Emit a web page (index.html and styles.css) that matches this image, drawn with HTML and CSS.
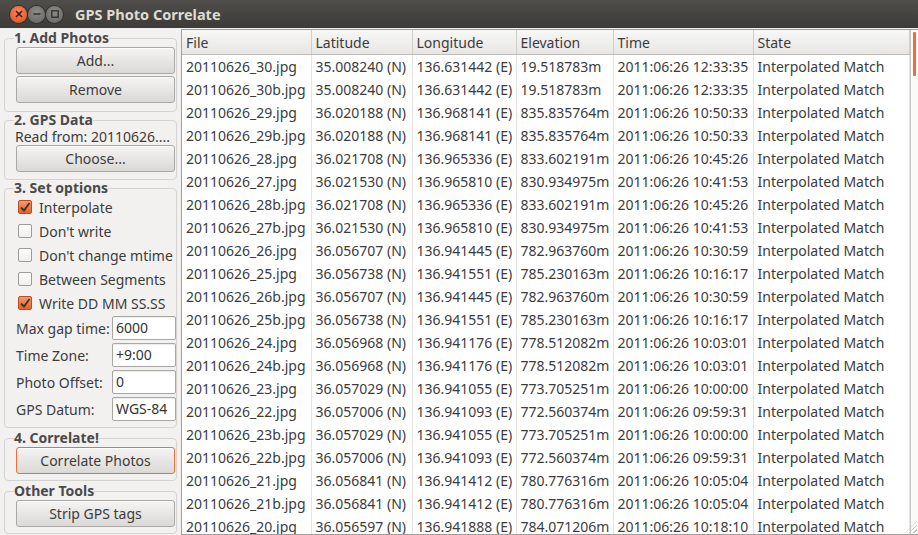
FILE: index.html
```html
<!DOCTYPE html>
<html lang="en">
<head>
  <meta charset="UTF-8" />
  <title>GPS Photo Correlate</title>
  <link rel="stylesheet" href="styles.css">
</head>
<body>
  <div class="window">
    <div class="titlebar">
      <div class="wm-buttons">
        <span class="wm-btn close">
          <svg width="8" height="8" viewBox="0 0 8 8"><path d="M1 1L7 7M7 1L1 7" stroke="#3a1a0a" stroke-width="1.6"/></svg>
        </span>
        <span class="wm-btn">
          <svg width="8" height="8" viewBox="0 0 8 8"><path d="M0.5 4H7.5" stroke="#2e2d2a" stroke-width="1.4"/></svg>
        </span>
        <span class="wm-btn">
          <svg width="8" height="8" viewBox="0 0 8 8"><rect x="0.8" y="0.8" width="6.4" height="6.4" fill="none" stroke="#2e2d2a" stroke-width="1.3"/></svg>
        </span>
      </div>
      <div class="title">GPS Photo Correlate</div>
    </div>

    <div class="main">
      <div class="sidebar">
        <fieldset class="frame photos-frame">
          <legend>1. Add Photos</legend>
          <button class="btn">Add...</button>
          <button class="btn">Remove</button>
        </fieldset>

        <fieldset class="frame gps-frame">
          <legend>2. GPS Data</legend>
          <div class="read-from">Read from: 20110626....</div>
          <button class="btn">Choose...</button>
        </fieldset>

        <fieldset class="frame options">
          <legend>3. Set options</legend>
          <label class="check"><span class="box checked"><svg width="12" height="12" viewBox="0 0 12 12"><path d="M2 6.5L5 9.5L10.5 2" fill="none" stroke="#4a2c1c" stroke-width="1.8"/></svg></span>Interpolate</label>
          <label class="check"><span class="box"></span>Don't write</label>
          <label class="check"><span class="box"></span>Don't change mtime</label>
          <label class="check"><span class="box"></span>Between Segments</label>
          <label class="check"><span class="box checked"><svg width="12" height="12" viewBox="0 0 12 12"><path d="M2 6.5L5 9.5L10.5 2" fill="none" stroke="#4a2c1c" stroke-width="1.8"/></svg></span>Write DD MM SS.SS</label>
          <div class="form">
            <span>Max gap time:</span><span class="entry">6000</span>
            <span>Time Zone:</span><span class="entry">+9:00</span>
            <span>Photo Offset:</span><span class="entry">0</span>
            <span>GPS Datum:</span><span class="entry">WGS-84</span>
          </div>
        </fieldset>

        <fieldset class="frame">
          <legend>4. Correlate!</legend>
          <button class="btn focus">Correlate Photos</button>
        </fieldset>

        <fieldset class="frame tools">
          <legend>Other Tools</legend>
          <button class="btn">Strip GPS tags</button>
        </fieldset>
      </div>

      <div class="list">
        <div class="list-scroll">
          <table class="photos">
            <colgroup>
              <col style="width:129px"><col style="width:101px"><col style="width:104px"><col style="width:97px"><col style="width:140px"><col>
            </colgroup>
            <thead>
              <tr><th>File</th><th>Latitude</th><th>Longitude</th><th>Elevation</th><th>Time</th><th>State</th></tr>
            </thead>
            <tbody>
              <tr><td>20110626_30.jpg</td><td>35.008240 (N)</td><td>136.631442 (E)</td><td>19.518783m</td><td>2011:06:26 12:33:35</td><td>Interpolated Match</td></tr>
              <tr><td>20110626_30b.jpg</td><td>35.008240 (N)</td><td>136.631442 (E)</td><td>19.518783m</td><td>2011:06:26 12:33:35</td><td>Interpolated Match</td></tr>
              <tr><td>20110626_29.jpg</td><td>36.020188 (N)</td><td>136.968141 (E)</td><td>835.835764m</td><td>2011:06:26 10:50:33</td><td>Interpolated Match</td></tr>
              <tr><td>20110626_29b.jpg</td><td>36.020188 (N)</td><td>136.968141 (E)</td><td>835.835764m</td><td>2011:06:26 10:50:33</td><td>Interpolated Match</td></tr>
              <tr><td>20110626_28.jpg</td><td>36.021708 (N)</td><td>136.965336 (E)</td><td>833.602191m</td><td>2011:06:26 10:45:26</td><td>Interpolated Match</td></tr>
              <tr><td>20110626_27.jpg</td><td>36.021530 (N)</td><td>136.965810 (E)</td><td>830.934975m</td><td>2011:06:26 10:41:53</td><td>Interpolated Match</td></tr>
              <tr><td>20110626_28b.jpg</td><td>36.021708 (N)</td><td>136.965336 (E)</td><td>833.602191m</td><td>2011:06:26 10:45:26</td><td>Interpolated Match</td></tr>
              <tr><td>20110626_27b.jpg</td><td>36.021530 (N)</td><td>136.965810 (E)</td><td>830.934975m</td><td>2011:06:26 10:41:53</td><td>Interpolated Match</td></tr>
              <tr><td>20110626_26.jpg</td><td>36.056707 (N)</td><td>136.941445 (E)</td><td>782.963760m</td><td>2011:06:26 10:30:59</td><td>Interpolated Match</td></tr>
              <tr><td>20110626_25.jpg</td><td>36.056738 (N)</td><td>136.941551 (E)</td><td>785.230163m</td><td>2011:06:26 10:16:17</td><td>Interpolated Match</td></tr>
              <tr><td>20110626_26b.jpg</td><td>36.056707 (N)</td><td>136.941445 (E)</td><td>782.963760m</td><td>2011:06:26 10:30:59</td><td>Interpolated Match</td></tr>
              <tr><td>20110626_25b.jpg</td><td>36.056738 (N)</td><td>136.941551 (E)</td><td>785.230163m</td><td>2011:06:26 10:16:17</td><td>Interpolated Match</td></tr>
              <tr><td>20110626_24.jpg</td><td>36.056968 (N)</td><td>136.941176 (E)</td><td>778.512082m</td><td>2011:06:26 10:03:01</td><td>Interpolated Match</td></tr>
              <tr><td>20110626_24b.jpg</td><td>36.056968 (N)</td><td>136.941176 (E)</td><td>778.512082m</td><td>2011:06:26 10:03:01</td><td>Interpolated Match</td></tr>
              <tr><td>20110626_23.jpg</td><td>36.057029 (N)</td><td>136.941055 (E)</td><td>773.705251m</td><td>2011:06:26 10:00:00</td><td>Interpolated Match</td></tr>
              <tr><td>20110626_22.jpg</td><td>36.057006 (N)</td><td>136.941093 (E)</td><td>772.560374m</td><td>2011:06:26 09:59:31</td><td>Interpolated Match</td></tr>
              <tr><td>20110626_23b.jpg</td><td>36.057029 (N)</td><td>136.941055 (E)</td><td>773.705251m</td><td>2011:06:26 10:00:00</td><td>Interpolated Match</td></tr>
              <tr><td>20110626_22b.jpg</td><td>36.057006 (N)</td><td>136.941093 (E)</td><td>772.560374m</td><td>2011:06:26 09:59:31</td><td>Interpolated Match</td></tr>
              <tr><td>20110626_21.jpg</td><td>36.056841 (N)</td><td>136.941412 (E)</td><td>780.776316m</td><td>2011:06:26 10:05:04</td><td>Interpolated Match</td></tr>
              <tr><td>20110626_21b.jpg</td><td>36.056841 (N)</td><td>136.941412 (E)</td><td>780.776316m</td><td>2011:06:26 10:05:04</td><td>Interpolated Match</td></tr>
              <tr><td>20110626_20.jpg</td><td>36.056597 (N)</td><td>136.941888 (E)</td><td>784.071206m</td><td>2011:06:26 10:18:10</td><td>Interpolated Match</td></tr>
            </tbody>
          </table>
        </div>
        <div class="scrollbar"><div class="thumb"></div></div>
        <div class="grip"></div>
      </div>
    </div>
  </div>
</body>
</html>
```

FILE: styles.css
```css
:root {
  --bg: #f2f1f0;
  --text: #3c3c3c;
  --frame: #d6d4d0;
  --accent: #e9713e;
  --ui-font: 'Noto Sans', 'DejaVu Sans', sans-serif;
}

body {
  margin: 0;
  width: 918px;
  height: 535px;
  overflow: hidden;
  font-family: var(--ui-font);
  font-size: 14px;
  color: var(--text);
}

.window {
  height: 535px;
  display: flex;
  flex-direction: column;
  background: var(--bg);
}

.titlebar {
  height: 28px;
  flex: none;
  display: flex;
  align-items: center;
  background: linear-gradient(#4f4e4a, #3c3b37);
  color: #dfdbd2;
}

.wm-buttons {
  display: flex;
  gap: 1px;
  margin-left: 10px;
}

.wm-btn {
  width: 17px;
  height: 17px;
  border-radius: 50%;
  display: flex;
  align-items: center;
  justify-content: center;
  background: radial-gradient(circle at 50% 35%, #8d8c88, #64635f);
  box-shadow: 0 0 0 1px #33322f;
}

.wm-btn.close {
  background: radial-gradient(circle at 50% 35%, #f88a5a, #e0491a);
}

.title {
  margin-left: 12px;
  font-weight: bold;
  font-size: 14.5px;
}

.main {
  flex: 1;
  display: flex;
  min-height: 0;
}

.sidebar {
  width: 181px;
  flex: none;
  display: flex;
  flex-direction: column;
  padding-top: 2px;
}

.frame {
  margin: 0 4px 0 4px;
  padding: 0 2px 4px 11px;
  border: 1px solid var(--frame);
  border-radius: 4px;
  display: flex;
  flex-direction: column;
  min-width: 0;
}

.frame.photos-frame {
  padding-bottom: 6px;
}

.frame.gps-frame {
  padding-bottom: 5px;
}

.frame.options {
  margin-bottom: 2px;
}

.frame.tools {
  margin-top: 2px;
}

.frame legend {
  font-weight: bold;
  padding: 0;
  margin-left: -2px;
  line-height: 16px;
  color: #4a4a4a;
}

.btn {
  font-family: var(--ui-font);
  font-size: 14px;
  color: var(--text);
  height: 27px;
  width: 159px;
  margin: 1px 0 2px 0;
  padding: 0;
  border: 1px solid #a9a8a5;
  border-radius: 3px;
  background: linear-gradient(#f5f4f3, #dbd9d6);
  box-shadow: inset 0 1px 0 #fbfbfa;
}

.btn + .btn {
  margin-top: 0;
}

.btn.focus {
  border-color: #e9713e;
}

.read-from {
  margin: 1px 0 -1px -1px;
  line-height: 16px;
  white-space: nowrap;
}

.check {
  display: flex;
  align-items: center;
  height: 24px;
  margin-left: 2px;
}

.frame legend + .check {
  margin-top: -1px;
}

.box {
  width: 14px;
  height: 14px;
  box-sizing: border-box;
  border: 1px solid #9c9b98;
  border-radius: 2px;
  background: linear-gradient(#fdfdfd, #efeeec);
  margin-right: 7px;
  display: flex;
  align-items: center;
  justify-content: center;
}

.box.checked {
  border-color: #b54f22;
  background: linear-gradient(#f59a6c, #e3622d);
}

.form {
  display: grid;
  grid-template-columns: 96px 64px;
  row-gap: 3px;
  align-items: center;
  margin: 1px 0 2px 0;
}

.entry {
  height: 24px;
  box-sizing: border-box;
  border: 1px solid #a8a7a4;
  border-radius: 2px;
  background: #fff;
  padding-left: 3px;
  line-height: 22px;
  color: #333;
  box-shadow: inset 0 1px 1px rgba(0,0,0,0.08);
}

.list {
  flex: 1;
  position: relative;
  display: flex;
  border: 1px solid #a09f9c;
  border-right: none;
  margin-top: 1px;
  background: #fff;
  overflow: hidden;
}

.list-scroll {
  flex: 1;
  overflow: hidden;
}

.photos {
  border-collapse: collapse;
  table-layout: fixed;
  width: 100%;
  white-space: nowrap;
}

.photos th {
  height: 24px;
  text-align: left;
  font-weight: normal;
  padding: 0 4px;
  background: linear-gradient(#f7f7f6, #e7e6e4);
  border-right: 1px solid #cfcecb;
  border-bottom: 1px solid #bdbcb9;
}

.photos td {
  height: 23px;
  padding: 0 4px;
  border-right: 1px solid #e4e3e1;
  overflow: hidden;
}

.scrollbar {
  width: 7px;
  flex: none;
  border-left: 1px solid #c9c8c5;
  background: #fafaf9;
}

.thumb {
  width: 3px;
  height: 44px;
  margin: 2px 0 0 2px;
  background: var(--accent);
  border-radius: 1px;
}

.grip {
  position: absolute;
  right: 1px;
  bottom: 1px;
  width: 12px;
  height: 12px;
  background: repeating-linear-gradient(135deg, transparent 0 2px, #c6c5c2 2px 3px);
  clip-path: polygon(100% 0, 100% 100%, 0 100%);
}
```
